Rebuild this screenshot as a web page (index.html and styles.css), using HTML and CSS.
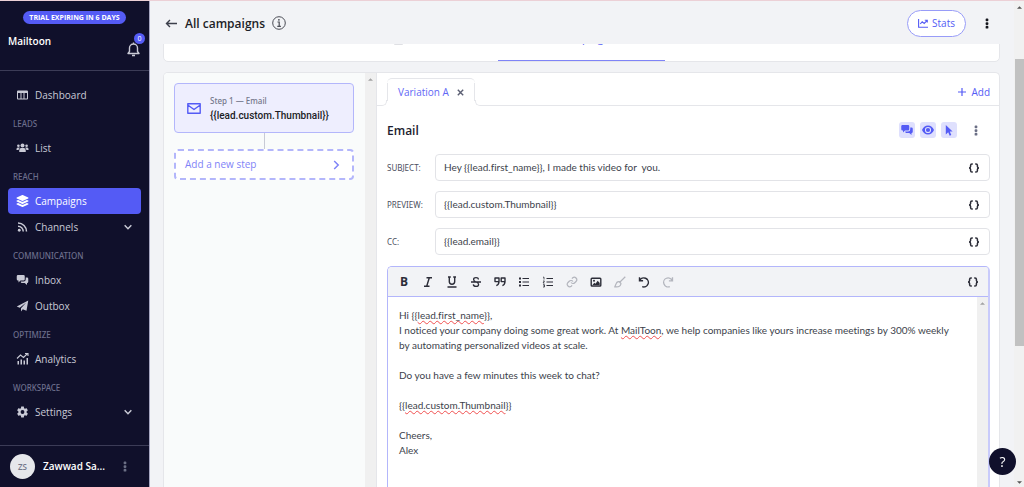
FILE: index.html
```html
<!DOCTYPE html>
<html lang="en">
<head>
<meta charset="utf-8">
<title>All campaigns</title>
<link rel="stylesheet" href="styles.css">
</head>
<body>
<svg class="defs" aria-hidden="true">
  <symbol id="chat" viewBox="0 0 24 24"><path d="M3 2h11a2.500 2.500 0 0 1 2.500 2.500v6A2.500 2.500 0 0 1 14 13H8l-4 4v-4H3a2.500 2.500 0 0 1-2.500-2.500v-6A2.500 2.500 0 0 1 3 2z"/><path d="M18.500 7H21a2.500 2.500 0 0 1 2.500 2.500v6A2.500 2.500 0 0 1 21 18v4l-4.500-4H11a2.500 2.500 0 0 1-2.500-2.500V15H14a4.500 4.500 0 0 0 4.500-4.500z"/></symbol>
  <symbol id="down" viewBox="0 0 12 12"><path d="M2 4l4 4 4-4" fill="none" stroke="currentColor" stroke-width="1.800"/></symbol>
  <symbol id="kebab" viewBox="0 0 4 12"><rect x="0.500" y="0.500" width="3" height="3" rx="1"/><rect x="0.500" y="4.500" width="3" height="3" rx="1"/><rect x="0.500" y="8.500" width="3" height="3" rx="1"/></symbol>
  <symbol id="braces" viewBox="0 0 12 10"><path d="M4.800 1H4Q2.600 1 2.600 2.300V3.600Q2.600 5 1 5q1.600 0 1.600 1.400v1.300Q2.600 9 4 9h.8M7.200 1H8q1.400 0 1.400 1.300v1.300Q9.400 5 11 5 9.400 5 9.400 6.400v1.300Q9.400 9 8 9h-.8" fill="none" stroke="currentColor" stroke-width="1.500"/></symbol>
</svg>
<div class="app">
  <aside class="sidebar">
    <div class="brand">
      <span class="trial">TRIAL EXPIRING IN 6 DAYS</span>
      <div class="brand-row">
        <strong>Mailtoon</strong>
        <button class="bell" aria-label="Notifications">
          <svg width="13" height="15" viewBox="0 0 13 15"><path d="M1 11.500h11L10.500 9.500V6a4 4 0 0 0-8 0v3.500zM6.500 2V.5M5 13.500h3" fill="none" stroke="currentColor" stroke-width="1.400" stroke-linejoin="round"/></svg>
          <span class="badge">0</span>
        </button>
      </div>
    </div>
    <nav class="nav">
      <a class="item" href="#"><svg viewBox="0 0 24 24"><path fill-rule="evenodd" d="M3 3h18q2 0 2 2v14q0 2-2 2H3q-2 0-2-2V5q0-2 2-2zm0 5v11h5V8zm7 0v11h4V8zm6 0v11h5V8z"/></svg>Dashboard</a>
      <h2>LEADS</h2>
      <a class="item" href="#"><svg viewBox="0 0 24 24"><circle cx="12" cy="7" r="4"/><circle cx="3.800" cy="7.500" r="2.600"/><circle cx="20.200" cy="7.500" r="2.600"/><path d="M5.500 20v-3.500q0-4.500 4-4.500h5q4 0 4 4.500V20zM0 16v-2q0-3 2.500-3h3q.8 0 1.200.3Q4.500 13 4.200 16zM24 16v-2q0-3-2.500-3h-3q-.8 0-1.200.3 2.200 1.700 2.500 4.700z"/></svg>List</a>
      <h2>REACH</h2>
      <a class="item active" href="#" aria-current="page"><svg viewBox="0 0 512 512"><path d="M12.410 148.020l232.940 105.670c6.800 3.090 14.490 3.090 21.290 0l232.940-105.670c16.550-7.510 16.550-32.520 0-40.030L266.650 2.310a25.607 25.607 0 0 0-21.290 0L12.410 107.980c-16.550 7.510-16.550 32.530 0 40.040zm487.180 88.280l-58.090-26.330-161.640 73.270c-7.560 3.430-15.590 5.170-23.860 5.170s-16.290-1.740-23.860-5.170L70.510 209.970l-58.100 26.330c-16.550 7.500-16.550 32.500 0 40l232.940 105.590c6.800 3.080 14.490 3.080 21.290 0L499.590 276.300c16.550-7.500 16.550-32.500 0-40zm0 127.800l-57.870-26.230-161.860 73.370c-7.560 3.430-15.590 5.170-23.860 5.170s-16.290-1.740-23.860-5.170L70.290 337.870 12.410 364.100c-16.550 7.500-16.550 32.500 0 40l232.940 105.590c6.800 3.080 14.490 3.080 21.290 0L499.590 404.100c16.550-7.500 16.550-32.500 0-40z"/></svg>Campaigns</a>
      <a class="item" href="#"><svg viewBox="0 0 24 24"><circle cx="5.500" cy="18.500" r="2.800"/><path d="M3 10.500A10.500 10.500 0 0 1 13.500 21M3 4a17 17 0 0 1 17 17" fill="none" stroke="currentColor" stroke-width="3"/></svg>Channels<svg class="chev"><use href="#down"/></svg></a>
      <h2>COMMUNICATION</h2>
      <a class="item" href="#"><svg><use href="#chat"/></svg>Inbox</a>
      <a class="item" href="#"><svg viewBox="0 0 24 24"><path d="M23.500 1L20 21.500l-7.500-3.200L9 23v-6.500L19.500 5 6.500 15.500.5 13z"/></svg>Outbox</a>
      <h2>OPTIMIZE</h2>
      <a class="item" href="#"><svg viewBox="0 0 24 24"><path d="M2 23v-7h3v7zM8 23V13h3v10zM14 23v-8h3v8zM20 23V10h3v13z"/><path d="M1 11l7-7 6 5 8-8M17 1h6v5" fill="none" stroke="currentColor" stroke-width="2.200"/></svg>Analytics</a>
      <h2>WORKSPACE</h2>
      <a class="item" href="#"><svg viewBox="1 1 22 22"><path d="M12,15.500A3.500,3.500 0 0,1 8.500,12A3.500,3.500 0 0,1 12,8.500A3.500,3.500 0 0,1 15.500,12A3.500,3.500 0 0,1 12,15.500M19.430,12.970C19.470,12.650 19.500,12.330 19.500,12C19.500,11.670 19.470,11.340 19.430,11L21.540,9.370C21.730,9.220 21.780,8.950 21.660,8.730L19.660,5.270C19.540,5.050 19.270,4.960 19.050,5.050L16.560,6.050C16.040,5.660 15.500,5.320 14.870,5.070L14.500,2.420C14.460,2.180 14.250,2 14,2H10C9.750,2 9.540,2.180 9.500,2.420L9.130,5.070C8.500,5.320 7.960,5.660 7.440,6.050L4.950,5.050C4.730,4.960 4.460,5.050 4.340,5.270L2.340,8.730C2.210,8.950 2.270,9.220 2.460,9.370L4.570,11C4.530,11.340 4.500,11.670 4.500,12C4.500,12.330 4.530,12.650 4.570,12.970L2.460,14.630C2.270,14.780 2.210,15.050 2.340,15.270L4.340,18.730C4.460,18.950 4.730,19.030 4.950,18.950L7.440,17.940C7.960,18.340 8.500,18.680 9.130,18.930L9.500,21.580C9.540,21.820 9.750,22 10,22H14C14.250,22 14.460,21.820 14.500,21.580L14.870,18.930C15.500,18.670 16.040,18.340 16.560,17.940L19.050,18.950C19.270,19.030 19.540,18.950 19.660,18.730L21.660,15.270C21.780,15.050 21.730,14.780 21.540,14.630L19.430,12.970Z"/></svg>Settings<svg class="chev"><use href="#down"/></svg></a>
    </nav>
    <div class="user">
      <span class="avatar">ZS</span>
      <strong>Zawwad Sa...</strong>
      <button class="dots" aria-label="Account menu"><svg width="4" height="11"><use href="#kebab"/></svg></button>
    </div>
  </aside>

  <main class="main">
    <header class="top">
      <a class="back" href="#" aria-label="Back"><svg width="12" height="9" viewBox="0 0 12 9"><path d="M12 4.500H1.500M5 1L1.500 4.500 5 8" fill="none" stroke="currentColor" stroke-width="1.400"/></svg></a>
      <h1>All campaigns</h1>
      <button class="info" aria-label="Information"><svg width="14" height="14" viewBox="0 0 14 14"><circle cx="7" cy="7" r="6.300" fill="none" stroke="currentColor"/><path d="M5.500 6h1.700v4.200M5.300 10.300h3.600" fill="none" stroke="currentColor" stroke-width="1.200"/><circle cx="6.900" cy="3.800" r=".9"/></svg></button>
      <button class="stats"><svg width="10" height="9" viewBox="0 0 10 9"><path d="M.6 0v8.200H10M2.200 5l2-2.200 2 1.600L9 1.600M6.800 1.200h2.500v2.300" fill="none" stroke="currentColor" stroke-width="1.100"/></svg>Stats</button>
      <button class="more" aria-label="More"><svg width="4" height="11"><use href="#kebab"/></svg></button>
    </header>
    <div class="content">
      <div class="steps-nav">
        <span class="step-tab"></span>
        <a class="step-tab muted" href="#" aria-label="Previous section"><svg width="9" height="9" viewBox="0 0 9 9"><rect width="9" height="9" rx="1"/></svg></a>
        <a class="step-tab current" href="#"><svg width="3" height="14" viewBox="0 0 3 14"><path d="M1 0h1v14H1z"/></svg>Campaign</a>
        <span class="step-tab"></span>
        <span class="step-tab"></span>
      </div>
      <div class="panel">
        <section class="sequence">
          <div class="sequence-list">
            <button class="step">
              <svg width="14" height="11" viewBox="0 0 14 11"><path d="M.8.8h12.400v9.400H.8zM.8 2l6.200 4.500L13.200 2" fill="none" stroke="currentColor" stroke-width="1.400" stroke-linejoin="round"/></svg>
              <span class="step-text"><small>Step 1 — Email</small><b>{{lead.custom.Thumbnail}}</b></span>
            </button>
            <div class="connector"></div>
            <button class="add-step">Add a new step<svg width="7" height="10" viewBox="0 0 7 10"><path d="M1.200 1l4 4-4 4" fill="none" stroke="currentColor" stroke-width="1.500"/></svg></button>
          </div>
          <div class="bar"><svg width="5" height="3" viewBox="0 0 6 3"><path d="M0 3l3-3 3 3z"/></svg></div>
        </section>
        <section class="editor-pane">
          <div class="tabs">
            <span class="edge left"></span>
            <div class="tab"><a href="#">Variation A</a><button aria-label="Close variation"><svg width="7" height="7" viewBox="0 0 7 7"><path d="M.8.8l5.400 5.400M6.200.8L.8 6.200" stroke="currentColor" stroke-width="1.400"/></svg></button></div>
            <span class="edge right"></span>
            <div class="tabs-rest"><button class="add"><svg width="8" height="8" viewBox="0 0 8 8"><path d="M4 0v8M0 4h8" stroke="currentColor" stroke-width="1.200"/></svg>Add</button></div>
          </div>
          <div class="form">
            <div class="form-head">
              <h2>Email</h2>
              <button class="chip" aria-label="Replies"><svg width="12" height="12"><use href="#chat"/></svg></button>
              <button class="chip" aria-label="Opens"><svg width="12" height="10" viewBox="0 0 24 18"><path fill-rule="evenodd" d="M12 0c5.500 0 10 4 12 9-2 5-6.500 9-12 9S2 14 0 9C2 4 6.500 0 12 0zm0 2.800a6.200 6.200 0 1 0 0 12.400 6.200 6.200 0 0 0 0-12.400z"/><circle cx="12" cy="9" r="4.200"/></svg></button>
              <button class="chip" aria-label="Clicks"><svg width="8" height="11" viewBox="0 0 8 11"><path d="M.8 0l6.800 6.600H4.800l1.500 3.500-1.600.7-1.500-3.600L.8 9.400z"/></svg></button>
              <button class="dots" aria-label="Email menu"><svg width="4" height="11"><use href="#kebab"/></svg></button>
            </div>
            <div class="field"><label for="subject">SUBJECT:</label><div class="box"><input id="subject" value="Hey {{lead.first_name}}, I made this video for  you."><button aria-label="Insert variable"><svg width="12" height="10"><use href="#braces"/></svg></button></div></div>
            <div class="field"><label for="preview">PREVIEW:</label><div class="box"><input id="preview" value="{{lead.custom.Thumbnail}}"><button aria-label="Insert variable"><svg width="12" height="10"><use href="#braces"/></svg></button></div></div>
            <div class="field"><label for="cc">CC:</label><div class="box"><input id="cc" value="{{lead.email}}"><button aria-label="Insert variable"><svg width="12" height="10"><use href="#braces"/></svg></button></div></div>
            <div class="editor">
              <div class="toolbar">
                <button aria-label="Bold" class="bold">B</button>
                <button aria-label="Italic"><svg viewBox="0 0 12 12"><path d="M4.500 1.700H10M2 10.300h5.500M7.300 1.700l-2.600 8.600" fill="none" stroke="currentColor" stroke-width="1.400"/></svg></button>
                <button aria-label="Underline"><svg viewBox="0 0 12 12"><path d="M3.300 1v4.500a2.700 2.700 0 0 0 5.400 0V1M2 1h2.800M7.200 1H10M1.500 11h9" fill="none" stroke="currentColor" stroke-width="1.400"/></svg></button>
                <button aria-label="Strikethrough"><svg viewBox="0 0 12 12"><path d="M1 6h10M8.500 3.500Q8.300 1.600 6 1.600 3.600 1.600 3.600 3.500q0 1.700 2.400 2.500 2.600.8 2.600 2.500 0 1.900-2.600 1.900-2.500 0-2.700-2" fill="none" stroke="currentColor" stroke-width="1.300"/></svg></button>
                <button aria-label="Quote"><svg viewBox="0 0 12 12"><path d="M5 2H1v3.600h4zv3.600Q5 8.600 2.300 9.600M11 2H7.200v3.600H11zv3.600Q11 8.600 8.400 9.600" fill="none" stroke="currentColor" stroke-width="1.400" stroke-linejoin="round"/></svg></button>
                <button aria-label="Bulleted list"><svg viewBox="0 0 12 12"><path d="M1 2.500h2M1 6h2M1 9.500h2" stroke="currentColor" stroke-width="1.800"/><path d="M4.500 2.500H11M4.500 6H11M4.500 9.500H11" stroke="currentColor" stroke-width="1.100"/></svg></button>
                <button aria-label="Numbered list"><svg viewBox="0 0 12 12"><path d="M1 1.200h1v2.300M1 5h1.500L1 7h1.500M1 8.700h1.500v2.300H1M1.500 9.800h1" fill="none" stroke="currentColor" stroke-width=".8"/><path d="M4.500 2.500H11M4.500 6H11M4.500 9.500H11" stroke="currentColor" stroke-width="1.100"/></svg></button>
                <button aria-label="Link" disabled><svg viewBox="0 0 24 24"><path d="M10 13a5 5 0 0 0 7.500.5l3-3a5 5 0 0 0-7-7l-1.700 1.700M14 11a5 5 0 0 0-7.500-.5l-3 3a5 5 0 0 0 7 7l1.700-1.700" fill="none" stroke="currentColor" stroke-width="2.400"/></svg></button>
                <button aria-label="Image"><svg viewBox="0 0 12 12"><rect x="1.200" y="2.200" width="9.600" height="7.800" rx=".8" fill="none" stroke="currentColor" stroke-width="1.400"/><circle cx="4" cy="4.700" r="1"/><path d="M2.500 9l1.800-2.300 1.200 1L7.700 4.800 9.700 7v2z"/></svg></button>
                <button aria-label="Clear formatting" disabled><svg viewBox="0 0 12 12"><path d="M11.300.8L6 6M5 5.500l2 2M5.200 5.600Q3 5.300 2.200 7.500L.8 10.800Q6.500 11.500 7 7.500z" fill="none" stroke="currentColor" stroke-width="1.200"/></svg></button>
                <button aria-label="Undo"><svg viewBox="0 0 12 12"><path d="M1.500 1.200v3.600h3.600M1.700 4.700A4.500 4.500 0 1 1 4.200 10.600" fill="none" stroke="currentColor" stroke-width="1.400"/></svg></button>
                <button aria-label="Redo" disabled><svg viewBox="0 0 12 12"><path d="M10.500 1.200v3.600H6.900M10.300 4.700A4.500 4.500 0 1 0 7.800 10.600" fill="none" stroke="currentColor" stroke-width="1.300"/></svg></button>
                <button class="vars" aria-label="Insert variable"><svg viewBox="0 0 12 10"><use href="#braces"/></svg></button>
              </div>
              <div class="editor-body">
                <div class="text" role="textbox" aria-label="Email body" contenteditable="true" spellcheck="false">
                  <p>Hi {{<u>lead.first_name</u>}},</p>
                  <p>I noticed your company doing some great work. At <u>MailToon</u>, we help companies like yours increase meetings by 300% weekly by automating personalized videos at scale.</p>
                  <p><br></p>
                  <p>Do you have a few minutes this week to chat?</p>
                  <p><br></p>
                  <p>{{<u>lead.custom.Thumbnail</u>}}</p>
                  <p><br></p>
                  <p>Cheers,</p>
                  <p>Alex</p>
                </div>
                <div class="bar"><svg width="5" height="3" viewBox="0 0 6 3"><path d="M0 3l3-3 3 3z"/></svg></div>
              </div>
            </div>
          </div>
        </section>
      </div>
    </div>
  </main>
  <div class="page-bar"><svg width="5" height="3" viewBox="0 0 6 3"><path d="M0 3l3-3 3 3z"/></svg><span class="thumb"></span><svg width="5" height="3" viewBox="0 0 6 3"><path d="M0 0l3 3 3-3z"/></svg></div>
  <button class="help" aria-label="Help">?</button>
</div>
</body>
</html>
```
FILE: styles.css
```css
* { box-sizing: border-box; margin: 0; padding: 0; }
body { font: 10px/15px "Open Sans", "Noto Sans", sans-serif; color: #3c3f4b; background: #f2f3f6; }
button, input { font: inherit; color: inherit; border: 0; background: none; }
button { display: flex; align-items: center; justify-content: center; }
a { color: inherit; text-decoration: none; }
svg { fill: currentColor; display: block; flex: none; }
.defs { position: absolute; width: 0; height: 0; }
.app { display: flex; height: 100vh; overflow: hidden; border-top: 1px solid #ecd0d6; }

.sidebar { width: 150px; flex: none; display: flex; flex-direction: column; background: #10102b; border-right: 1px solid #a6a6c2; color: #c9cad6; }
.brand { height: 70px; flex: none; padding: 10px 8px 0; border-bottom: 1px solid #3c3c57; display: flex; flex-direction: column; }
.trial { align-self: center; padding: 0 6px; border-radius: 7px; background: #545bf5; color: #fff; font-size: 7px; line-height: 13px; font-weight: 700; white-space: nowrap; }
.brand-row { display: flex; justify-content: space-between; align-items: flex-start; padding-top: 10px; }
.brand-row strong { color: #fff; font-weight: 600; line-height: 14px; }
.bell { position: relative; margin-top: 8px; margin-right: 1px; color: #c9cad6; }
.badge { position: absolute; top: -9px; right: -5px; width: 11px; height: 11px; border-radius: 50%; background: #545bf5; color: #fff; font-size: 7px; line-height: 11px; text-align: center; }
.nav { flex: 1; padding: 11px 8px 0; }
.item { display: flex; align-items: center; height: 26px; padding: 0 8px; gap: 6px; border-radius: 4px; font-weight: 500; }
.item svg { width: 13px; height: 12px; }
.item .chev { width: 10px; height: 10px; margin-left: auto; }
.active { background: #545bf5; color: #fff; }
.nav h2, .step small, .field label { font-family: "Noto Sans", sans-serif; font-size: 8px; }
.nav h2 { height: 27px; padding: 8px 5px 0; font-weight: 500; color: #6c6e8c; }
.user { height: 42px; flex: none; display: flex; align-items: center; gap: 8px; padding: 0 22px 0 10px; border-top: 1px solid #3c3c57; color: #fff; }
.avatar { width: 25px; height: 25px; border-radius: 50%; background: #e6e7eb; color: #74788b; font-size: 8px; line-height: 25px; text-align: center; font-weight: 600; }
.user strong { font-weight: 600; flex: 1; white-space: nowrap; }
.dots { color: #6b6f85; }

.main { flex: 1; min-width: 0; display: flex; flex-direction: column; padding: 0 14px 0 13px; }
.top { height: 43px; flex: none; display: flex; align-items: center; padding: 1px 0 0 2px; }
.top h1 { font-size: 12px; font-weight: 600; color: #1c1d26; margin: 0 7px 0 8px; }
.info { color: #4a4c55; }
.stats { margin-left: auto; height: 27px; padding: 0 10px; gap: 4px; border: 1px solid #989cf8; border-radius: 14px; background: #fff; color: #545bf5; font-weight: 500; }
.more { width: 4px; margin: 0 11px 0 19px; color: #15161d; }
.content { flex: 1; min-height: 0; overflow: hidden; display: flex; flex-direction: column; }
.steps-nav { height: 35px; margin-top: -17px; flex: none; display: grid; grid-template-columns: repeat(5, 1fr); background: #fff; border: 1px solid #e5e6ea; border-radius: 5px; }
.step-tab { display: flex; justify-content: center; gap: 3px; font-size: 11px; padding-top: 2px; }
.muted { color: #dfe0e4; padding: 8px 33px 0 0; }
.current { color: #545bf5; border-bottom: 1px solid #7f84f7; }
.panel { flex: 1; min-height: 0; margin-top: 10px; display: flex; background: #fff; border: 1px solid #e5e6ea; border-bottom: 0; border-radius: 5px 5px 0 0; overflow: hidden; }
.sequence { width: 213px; flex: none; display: flex; background: #f9fbfb; border-right: 1px solid #e5e6ea; }
.sequence-list { flex: 1; padding: 10px 11px 0 10px; }
.bar { width: 11px; background: #f0f0f0; color: #a3a3a3; display: flex; justify-content: center; padding-top: 5px; }
.step { width: 100%; height: 50px; justify-content: flex-start; gap: 9px; padding: 0 12px; background: #eeeefe; border: 1px solid #b3b6fb; border-radius: 4px; color: #545bf5; text-align: left; }
.step-text { display: flex; flex-direction: column; }
.step small { font-weight: 500; color: #74788b; }
.step b { font-family: Roboto, sans-serif; font-weight: 500; color: #1c1d26; }
.connector { width: 1px; height: 16px; margin: 0 auto; background: #c8cad6; }
.add-step { width: 100%; height: 31px; justify-content: space-between; padding: 0 12px 0 9px; border: 2px dashed #b3b6fb; border-radius: 4px; background: #fff; color: #7f84f7; }

.editor-pane { flex: 1; min-width: 0; display: flex; flex-direction: column; }
.tabs { height: 33px; flex: none; display: flex; align-items: flex-end; }
.edge { height: 6px; border-bottom: 1px solid #e5e6ea; }
.left { width: 10px; border-right: 1px solid #e5e6ea; border-bottom-right-radius: 5px; }
.right { width: 6px; border-left: 1px solid #e5e6ea; border-bottom-left-radius: 5px; }
.tab { height: 28px; padding: 0 11px; display: flex; align-items: center; gap: 8px; border-top: 1px solid #e5e6ea; border-radius: 5px 5px 0 0; background: linear-gradient(#e5e6ea, #e5e6ea) 0 4px / 1px 18px no-repeat, linear-gradient(#e5e6ea, #e5e6ea) 100% 4px / 1px 18px no-repeat; color: #6167f5; font-weight: 500; }
.tab button { color: #5b5f73; }
.tabs-rest { flex: 1; height: 33px; border-bottom: 1px solid #e5e6ea; display: flex; justify-content: flex-end; padding: 6px 9px 0 0; }
.add { gap: 5px; color: #545bf5; }
.form { flex: 1; min-height: 0; padding: 16px 9px 0 10px; display: flex; flex-direction: column; gap: 10px; }
.form-head { height: 16px; margin-bottom: 6px; display: flex; align-items: center; gap: 5px; padding-right: 12px; }
.form-head h2 { flex: 1; font-size: 12px; font-weight: 600; color: #1c1d2e; }
.chip { width: 16px; height: 16px; background: #dfe0fd; border-radius: 3px; color: #545bf5; }
.form-head .dots { margin-left: 12px; }
.field { display: flex; align-items: center; }
.field label { width: 48px; color: #4c4f60; }
.box { flex: 1; height: 27px; display: flex; align-items: center; border: 1px solid #e2e3e7; border-radius: 4px; padding: 0 9px 0 8px; }
.box input { flex: 1; min-width: 0; outline: 0; }
.box input, .text { font-family: Lato, sans-serif; font-variant-ligatures: none; }
.box button { color: #2c2d38; }
.editor { flex: 1; min-height: 0; margin-top: 1px; display: flex; flex-direction: column; border: 1px solid #b3b6fb; border-right: 2px solid #c9cbfb; border-bottom: 0; border-radius: 5px 5px 0 0; overflow: hidden; }
.toolbar { height: 30px; flex: none; display: flex; align-items: center; gap: 12px; padding: 0 9px 0 10px; background: #f2f3f6; border-bottom: 1px solid #b3b6fb; color: #2c2d38; }
.toolbar svg { width: 12px; height: 12px; }
.toolbar button { width: 12px; }
.toolbar button:disabled { color: #b3b5bd; }
.toolbar .bold { font-weight: 700; font-size: 12px; }
.toolbar .vars { margin-left: auto; }
.editor-body { flex: 1; min-height: 0; display: flex; }
.text { flex: 1; padding: 11px 16px 0 11px; outline: 0; }
.text u { text-decoration: underline wavy #f04f4f 1px; text-underline-offset: 1px; text-decoration-skip-ink: none; }
.page-bar { width: 10px; flex: none; display: flex; flex-direction: column; align-items: center; padding: 5px 0 3px; background: #f1f1f1; color: #555; }
.thumb { align-self: stretch; flex: 0 0 60%; margin: 50px 0 auto 1px; background: #c1c1c1; }
.help { position: fixed; right: 8px; bottom: 12px; width: 27px; height: 27px; border-radius: 50%; background: #10102b; color: #fff; font-size: 14px; }
```
